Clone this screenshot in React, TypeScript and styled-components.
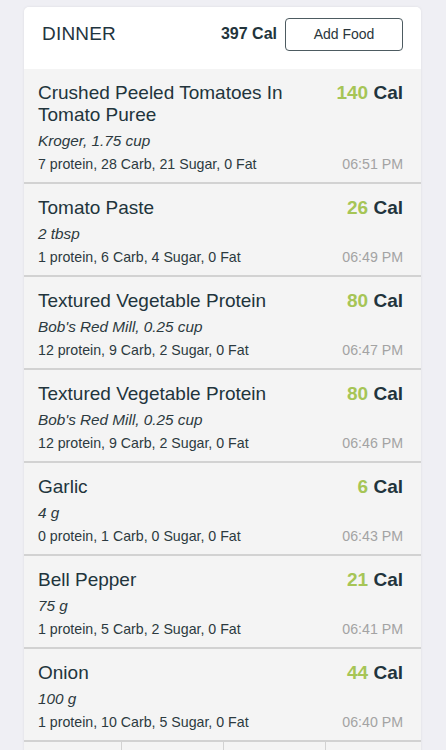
import React from "react";
import styled, { createGlobalStyle } from "styled-components";

const Global = createGlobalStyle`
  html, body { margin: 0; padding: 0; background: #efeff4; }
  body { font-family: "Liberation Sans", Arial, sans-serif; }
`;

const Page = styled.div`
  padding: 7px 25px 0 24px;
  height: 750px;
  box-sizing: border-box;
  overflow: hidden;
`;

const Card = styled.div`
  background: #f4f4f4;
  border-radius: 5px;
  box-shadow: 0 0 3px rgba(0, 0, 0, 0.08);
  overflow: hidden;
`;

const Header = styled.div`
  display: flex;
  align-items: center;
  background: #ffffff;
  height: 62px;
  padding: 0 18px 8px 18px;
  box-sizing: border-box;
`;

const MealTitle = styled.div`
  flex: 1;
  font-size: 19px;
  color: #1f3540;
  letter-spacing: 0.2px;
`;

const HeaderCal = styled.div`
  font-size: 16px;
  font-weight: bold;
  color: #22343c;
  margin-right: 8px;
`;

const AddButton = styled.button`
  width: 118px;
  height: 33px;
  border: 1.5px solid #4d5b61;
  border-radius: 4px;
  background: #fff;
  font-family: inherit;
  font-size: 14px;
  color: #2a363b;
  padding: 0;
`;

const Row = styled.div`
  display: grid;
  grid-template-columns: 1fr auto;
  column-gap: 12px;
  padding: 13px 18px 9px 14px;
  border-bottom: 2px solid #d2d2d2;
`;

const Name = styled.div`
  font-size: 19px;
  line-height: 22px;
  color: #22343c;
`;

const Cals = styled.div`
  font-size: 19px;
  line-height: 22px;
  font-weight: bold;
  color: #22343c;
  text-align: right;
  white-space: nowrap;
`;

const CalNum = styled.span`
  color: #a6c556;
`;

const Serving = styled.div`
  grid-column: 1 / 3;
  font-size: 15.3px;
  line-height: 20px;
  font-style: italic;
  color: #2c3a40;
  margin-top: 5px;
`;

const Macros = styled.div`
  font-size: 14.2px;
  line-height: 18px;
  color: #2c3a40;
  margin-top: 4px;
`;

const Time = styled.div`
  font-size: 14.2px;
  line-height: 18px;
  color: #a3a3a3;
  text-align: right;
  margin-top: 4px;
`;

const Footer = styled.div`
  display: grid;
  grid-template-columns: 97px 102px 102px 1fr;
  height: 30px;
`;

const FooterCell = styled.div`
  border-left: 1px solid #d2d2d2;
  &:first-child { border-left: none; }
`;

const foods = [
  { name: "Crushed Peeled Tomatoes In Tomato Puree", cal: 140, serving: "Kroger, 1.75 cup", macros: "7 protein, 28 Carb, 21 Sugar, 0 Fat", time: "06:51 PM" },
  { name: "Tomato Paste", cal: 26, serving: "2 tbsp", macros: "1 protein, 6 Carb, 4 Sugar, 0 Fat", time: "06:49 PM" },
  { name: "Textured Vegetable Protein", cal: 80, serving: "Bob's Red Mill, 0.25 cup", macros: "12 protein, 9 Carb, 2 Sugar, 0 Fat", time: "06:47 PM" },
  { name: "Textured Vegetable Protein", cal: 80, serving: "Bob's Red Mill, 0.25 cup", macros: "12 protein, 9 Carb, 2 Sugar, 0 Fat", time: "06:46 PM" },
  { name: "Garlic", cal: 6, serving: "4 g", macros: "0 protein, 1 Carb, 0 Sugar, 0 Fat", time: "06:43 PM" },
  { name: "Bell Pepper", cal: 21, serving: "75 g", macros: "1 protein, 5 Carb, 2 Sugar, 0 Fat", time: "06:41 PM" },
  { name: "Onion", cal: 44, serving: "100 g", macros: "1 protein, 10 Carb, 5 Sugar, 0 Fat", time: "06:40 PM" },
];

export default function App() {
  return (
    <>
      <Global />
      <Page>
        <Card>
          <Header>
            <MealTitle>DINNER</MealTitle>
            <HeaderCal>397 Cal</HeaderCal>
            <AddButton>Add Food</AddButton>
          </Header>
          {foods.map((f, i) => (
            <Row key={i}>
              <Name>{f.name}</Name>
              <Cals>
                <CalNum>{f.cal}</CalNum> Cal
              </Cals>
              <Serving>{f.serving}</Serving>
              <Macros>{f.macros}</Macros>
              <Time>{f.time}</Time>
            </Row>
          ))}
          <Footer>
            <FooterCell />
            <FooterCell />
            <FooterCell />
            <FooterCell />
          </Footer>
        </Card>
      </Page>
    </>
  );
}
